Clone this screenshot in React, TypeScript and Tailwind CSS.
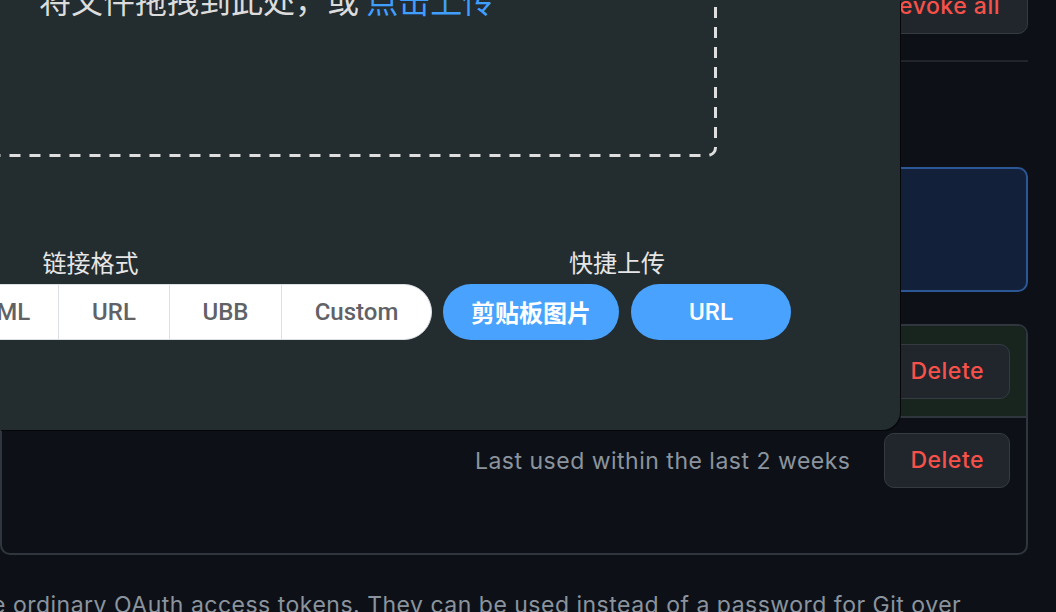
const formats = [
  { label: "Markdown", w: "w-[186px]" },
  { label: "HTML", w: "w-[122px]" },
  { label: "URL", w: "w-[111px]" },
  { label: "UBB", w: "w-[112px]" },
  { label: "Custom", w: "w-[150px]" },
];

function DeleteButton() {
  return (
    <button className="h-[55px] rounded-[10px] border border-[#363b42] bg-[#21262d] px-[25px] text-[23px] font-medium tracking-[0.5px] text-[#f85149]">
      Delete
    </button>
  );
}

export default function App() {
  return (
    <div className="relative h-[612px] w-[1056px] overflow-hidden bg-[#0d1117] font-['Inter',sans-serif]">
      {/* settings page under the dialog */}
      <div className="mr-[28px] flex flex-col">
        <div className="flex justify-end">
          <button className="-mt-[21px] h-[55px] rounded-[10px] border border-[#363b42] bg-[#21262d] px-[27px] text-[23px] font-medium tracking-[0.5px] text-[#f85149]">
            Revoke all
          </button>
        </div>
        <div className="mt-[26px] h-[2px] bg-[#21262d]" />
        <div className="mt-[105px] h-[125px] rounded-[10px] border-2 border-[#2b5797] bg-[#13203a]" />
        <div className="mt-[32px] overflow-hidden rounded-[10px] border-2 border-[#30363d]">
          <div className="flex h-[90px] items-center justify-end bg-[#18251f] pr-[16px]">
            <DeleteButton />
          </div>
          <div className="flex h-[137px] items-start justify-end gap-[34px] border-t-2 border-[#30363d] pr-[16px] pt-[15px]">
            <span className="mt-[13px] text-[23px] leading-[30px] tracking-[0.5px] text-[#8b949e]">Last used within the last 2 weeks</span>
            <DeleteButton />
          </div>
        </div>
        <p className="-ml-[8px] mr-[60px] mt-[34px] text-[23px] leading-[33px] tracking-[0.5px] text-[#8b949e]">
          e ordinary OAuth access tokens. They can be used instead of a password for Git over HTTPS, or can be used to authenticate to the API over Basic Authentication.
        </p>
      </div>

      {/* upload dialog */}
      <div className="absolute left-0 top-0 h-[430px] w-[900px] overflow-hidden rounded-br-[18px] bg-[#232c2f] font-['Noto_Sans_CJK_SC',sans-serif] shadow-[1px_1px_0_#05070a]">
        <div className="relative -ml-[20px] -mt-[40px] h-[197px] w-[737px] pl-[59px] pt-[23px]">
          <svg className="absolute inset-0" width="737" height="197">
            <rect x="1.5" y="1.5" width="734" height="194" rx="8" fill="none" stroke="#dedede" strokeWidth="3" strokeDasharray="11 9" strokeDashoffset="12" />
          </svg>
          <p className="relative whitespace-nowrap text-[32px] leading-[32px] text-[#dcdcdc]">
            将文件拖拽到此处，或 <span className="text-[#409eff]">点击上传</span>
          </p>
        </div>

        <div className="-ml-[251px] mt-[93px] flex gap-[11px]">
          <div className="flex flex-col items-center gap-[10px]">
            <span className="text-[24px] leading-[24px] text-[#e6e6e6]">链接格式</span>
            <div className="flex h-[56px] overflow-hidden rounded-full border border-[#dcdfe6] bg-white">
              {formats.map((f, i) => (
                <div
                  key={f.label}
                  className={`${f.w} flex items-center justify-center font-['Roboto',sans-serif] text-[24px] font-medium text-[#606266] ${i > 0 ? "border-l border-[#dcdfe6]" : ""}`}
                >
                  {f.label}
                </div>
              ))}
            </div>
          </div>
          <div className="flex flex-col items-center gap-[10px]">
            <span className="text-[24px] leading-[24px] text-[#e6e6e6]">快捷上传</span>
            <div className="flex gap-[12px]">
              <button className="h-[56px] w-[176px] rounded-full bg-[#49a2fd] text-[24px] font-bold text-white">剪贴板图片</button>
              <button className="h-[56px] w-[160px] rounded-full bg-[#49a2fd] font-['Roboto',sans-serif] text-[24px] font-medium text-white">URL</button>
            </div>
          </div>
        </div>
      </div>
    </div>
  );
}
